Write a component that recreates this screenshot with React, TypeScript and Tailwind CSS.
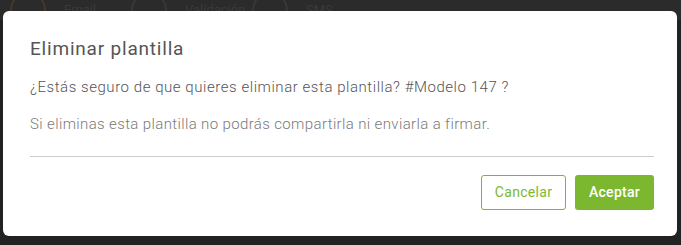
import React from 'react';

const STEPS = [
  { label: 'Email', active: true },
  { label: 'Validación', active: false },
  { label: 'SMS', active: false },
];

export default function App() {
  return (
    <div
      className="relative w-[681px] h-[245px] overflow-hidden bg-[#222222]"
      style={{ fontFamily: 'Roboto, "Noto Sans", sans-serif' }}
    >
      {/* Step indicator behind the overlay */}
      <div className="flex items-start pl-[10px] bg-[#2b2b2b] h-[20px]">
        {STEPS.map(step => (
          <div key={step.label} className="flex items-start w-[121px] shrink-0">
            <div
              className={`-mt-[8px] w-[36px] h-[36px] rounded-full border-2 shrink-0 ${
                step.active ? 'border-[#45392b]' : 'border-[#383838]'
              }`}
            />
            <span className="ml-[18px] mt-[2px] text-[13px] leading-[16px] text-[#3a3a3a] whitespace-nowrap">
              {step.label}
            </span>
          </div>
        ))}
      </div>

      {/* Modal */}
      <div className="absolute top-[11px] left-[3px] w-[674px] h-[225px] bg-white rounded-[6px] pl-[27px] pr-[23px] pt-[25px]">
        <h2 className="text-[19px] leading-[26px] tracking-[0.8px] text-[#555555] font-normal">Eliminar plantilla</h2>
        <p className="mt-[15px] text-[15px] leading-[20px] tracking-[0.55px] text-[#555555] font-light">
          ¿Estás seguro de que quieres eliminar esta plantilla? #Modelo 147 ?
        </p>
        <p className="mt-[17px] text-[15px] leading-[20px] tracking-[0.37px] text-[#7a7a7a] font-light">
          Si eliminas esta plantilla no podrás compartirla ni enviarla a firmar.
        </p>
        <div className="mt-[22px] h-px bg-[#cccccc]" />
        <div className="flex justify-end gap-[9px] mt-[18px]">
          <button className="w-[85px] h-[35px] rounded-[3px] border border-[#7cb82f] bg-white text-[14px] tracking-[0.3px] text-[#7cb82f]">
            Cancelar
          </button>
          <button className="w-[79px] h-[35px] rounded-[3px] bg-[#7cb82f] text-[14px] tracking-[0.3px] text-white font-medium">
            Aceptar
          </button>
        </div>
      </div>
    </div>
  );
}
